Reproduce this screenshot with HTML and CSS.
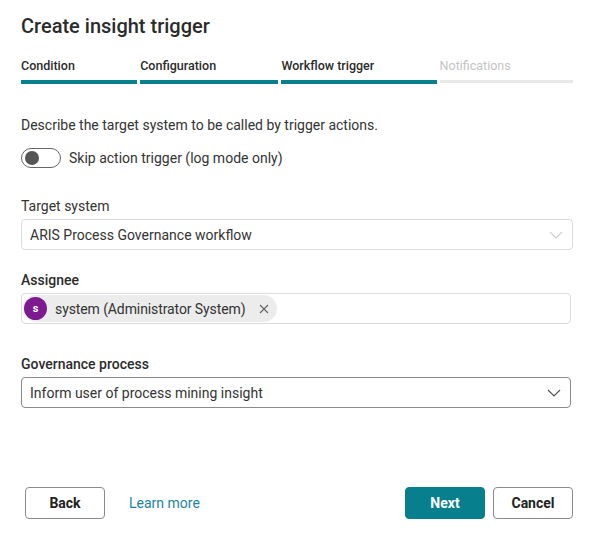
FILE: index.html
```html
<!DOCTYPE html>
<html>
<head>
    <title>Create insight trigger</title>
    <link rel="stylesheet" href="styles.css">
</head>
<body>
    <div class="dialog">
        <h1>Create insight trigger</h1>

        <div class="steps">
            <div class="step done">
                <span class="step-name">Condition</span>
                <div class="step-bar"></div>
            </div>
            <div class="step done">
                <span class="step-name">Configuration</span>
                <div class="step-bar"></div>
            </div>
            <div class="step done">
                <span class="step-name">Workflow trigger</span>
                <div class="step-bar"></div>
            </div>
            <div class="step">
                <span class="step-name">Notifications</span>
                <div class="step-bar"></div>
            </div>
        </div>

        <p class="intro">Describe the target system to be called by trigger actions.</p>

        <label class="toggle-row">
            <span class="toggle"><span class="knob"></span></span>
            Skip action trigger (log mode only)
        </label>

        <div class="field first">
            <div class="field-label">Target system</div>
            <div class="select disabled">
                <span>ARIS Process Governance workflow</span>
                <svg class="chevron" width="14" height="8" viewBox="0 0 14 8"><path d="M1 1l6 6 6-6" fill="none" stroke="currentColor" stroke-width="1.2"/></svg>
            </div>
        </div>

        <div class="field">
            <div class="field-label strong">Assignee</div>
            <div class="picker">
                <span class="chip">
                    <span class="avatar">s</span>
                    <span class="chip-text">system (Administrator System)</span>
                    <svg class="chip-close" width="10" height="10" viewBox="0 0 10 10"><path d="M1 1l8 8M9 1l-8 8" stroke="currentColor" stroke-width="1.2"/></svg>
                </span>
            </div>
        </div>

        <div class="field wide-gap">
            <div class="field-label strong">Governance process</div>
            <div class="select active">
                <span>Inform user of process mining insight</span>
                <svg class="chevron" width="14" height="8" viewBox="0 0 14 8"><path d="M1 1l6 6 6-6" fill="none" stroke="currentColor" stroke-width="1.2"/></svg>
            </div>
        </div>

        <div class="footer">
            <button class="btn">Back</button>
            <a class="link" href="#">Learn more</a>
            <div class="spacer"></div>
            <button class="btn primary">Next</button>
            <button class="btn">Cancel</button>
        </div>
    </div>
</body>
</html>
```

FILE: styles.css
```css
body {
    margin: 0;
    font-family: Roboto, "Liberation Sans", Arial, sans-serif;
    color: #333;
    background-color: #fff;
}

.dialog {
    box-sizing: border-box;
    height: 538px;
    padding: 14px 19px 19px 21px;
    display: flex;
    flex-direction: column;
}

h1 {
    margin: 0;
    font-size: 20px;
    line-height: 24px;
    font-weight: 500;
    color: #2b2b2b;
}

.steps {
    display: flex;
    gap: 3px;
    margin-top: 20px;
}

.step {
    flex: 1 1 auto;
    display: flex;
    flex-direction: column;
}

.step-name {
    font-size: 12.5px;
    line-height: 16px;
    font-weight: 400;
    color: #c4c4c4;
}

.step-bar {
    margin-top: 6px;
    height: 3px;
    background-color: #e8e8e8;
}

.step.done .step-name {
    font-weight: 500;
    color: #2b2b2b;
}

.step.done .step-bar {
    height: 4px;
    background-color: #087f8c;
}

.intro {
    margin: 31px 0 0;
    font-size: 14px;
    line-height: 20px;
}

.toggle-row {
    display: flex;
    align-items: center;
    gap: 8px;
    margin-top: 13px;
    font-size: 14px;
    line-height: 20px;
}

.toggle {
    box-sizing: border-box;
    width: 40px;
    height: 20px;
    border: 1px solid #666;
    border-radius: 10px;
    display: flex;
    align-items: center;
    padding-left: 3px;
}

.knob {
    width: 14px;
    height: 14px;
    border-radius: 50%;
    background-color: #555;
}

.field {
    margin-top: 20px;
}

.field.first {
    margin-top: 28px;
}

.field.wide-gap {
    margin-top: 30px;
}

.field-label {
    font-size: 14px;
    line-height: 20px;
    margin-bottom: 3px;
}

.field-label.strong {
    font-weight: 500;
    color: #2b2b2b;
}

.select {
    box-sizing: border-box;
    height: 31px;
    border: 1px solid #dcdcdc;
    border-radius: 4px;
    padding: 0 9px 0 8px;
    display: flex;
    align-items: center;
    justify-content: space-between;
    font-size: 14px;
}

.select.disabled .chevron {
    color: #cfcfcf;
}

.select.active {
    border-color: #8a8a8a;
    margin-right: 2px;
}

.select.active .chevron {
    color: #555;
}

.picker {
    box-sizing: border-box;
    height: 31px;
    margin-right: 2px;
    border: 1px solid #dcdcdc;
    border-radius: 4px;
    padding: 1px;
    display: flex;
    align-items: center;
}

.chip {
    height: 27px;
    display: flex;
    align-items: center;
    background-color: #ececec;
    border-radius: 14px;
    padding: 0 8px 0 1px;
    font-size: 14px;
    letter-spacing: -0.1px;
}

.avatar {
    width: 23px;
    height: 23px;
    border-radius: 50%;
    background-color: #7d1a8f;
    color: #fff;
    font-size: 11px;
    font-weight: 700;
    display: flex;
    align-items: center;
    justify-content: center;
}

.chip-text {
    margin-left: 8px;
}

.chip-close {
    margin-left: 14px;
    color: #666;
}

.footer {
    margin-top: auto;
    padding-left: 4px;
    display: flex;
    align-items: center;
}

.btn {
    box-sizing: border-box;
    width: 80px;
    height: 32px;
    border: 1px solid #8a8a8a;
    border-radius: 4px;
    background-color: #fff;
    color: #222;
    font-family: inherit;
    font-size: 14px;
    font-weight: 700;
    cursor: pointer;
}

.btn.primary {
    background-color: #087f8c;
    border-color: #087f8c;
    color: #fff;
    margin-right: 8px;
}

.link {
    margin-left: 24px;
    color: #1a85a0;
    font-size: 14px;
    text-decoration: none;
}

.spacer {
    flex: 1;
}
```
